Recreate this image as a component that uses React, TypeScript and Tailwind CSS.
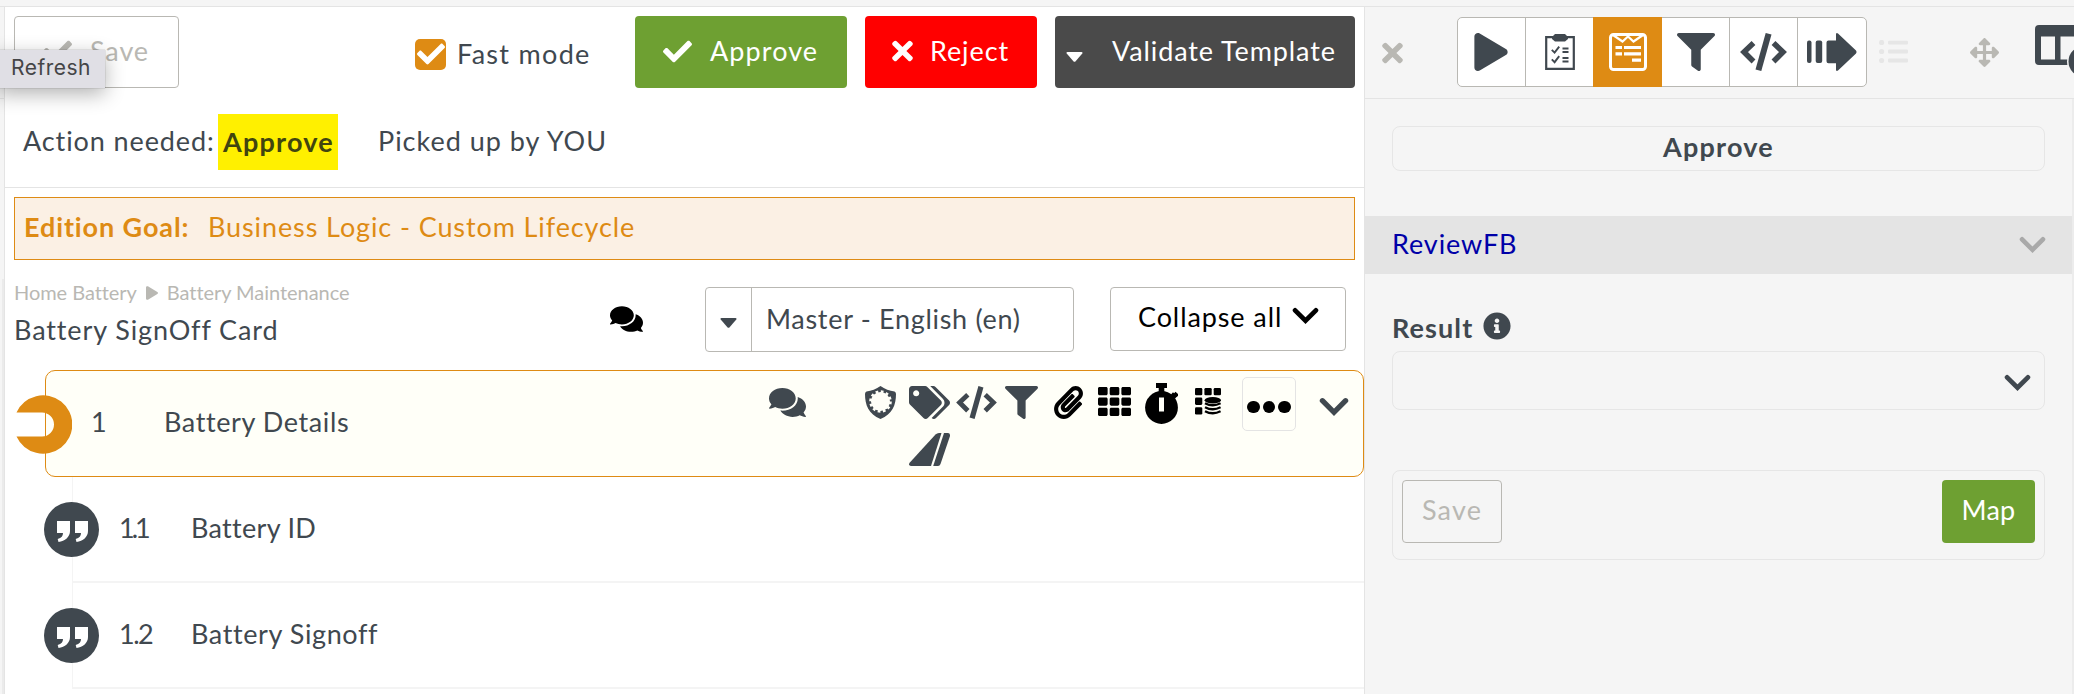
import React from 'react';
import { FaArrowsAlt, FaCheck, FaComments, FaFilter, FaInfoCircle, FaPaperclip, FaPlay, FaTags, FaTh, FaTimes } from 'react-icons/fa';

const children = [
  { id: '1.1', name: 'Battery ID', idTrack: 'tracking-[-3px]', nameTrack: 'tracking-[0.3px]' },
  { id: '1.2', name: 'Battery Signoff', idTrack: 'tracking-[-1.5px]', nameTrack: 'tracking-[0.6px]' },
];

const Chevron: React.FC<{ className?: string }> = ({ className }) => (
  <svg viewBox="0 0 28 19" className={className} fill="none" stroke="currentColor" strokeWidth="5" strokeLinecap="round">
    <path d="M3 3.5L14 14.5L25 3.5" />
  </svg>
);

const Caret: React.FC<{ className?: string }> = ({ className }) => (
  <svg viewBox="0 0 17 10" className={className} fill="currentColor">
    <path d="M1.5 0H15.5Q17 0.3 16.3 1.6L9.6 9.2Q8.5 10.2 7.4 9.2L0.7 1.6Q0 0.3 1.5 0Z" />
  </svg>
);

const CodeIcon: React.FC<{ className?: string }> = ({ className }) => (
  <svg viewBox="0 0 47 38" className={className} fill="none" stroke="currentColor">
    <path d="M13.5 10L4 19L13.5 28.5" strokeWidth="5.5" />
    <path d="M33.5 10L43 19L33.5 28.5" strokeWidth="5.5" />
    <path d="M28.6 0.8L18.4 37.2" strokeWidth="6" />
  </svg>
);

const ClipboardIcon = () => (
  <svg viewBox="0 0 30 36" className="w-[30px] h-[36px]" fill="none" stroke="currentColor">
    <path d="M1.2 3.2H28.8V34.8H1.2Z" strokeWidth="2.2" />
    <path d="M7 3L10 0H20L23 3V5L20 7.5H10L7 5Z" fill="currentColor" stroke="none" />
    <path d="M6.8 15.8L9.6 18.6L14.2 12.6M6.8 25.4L9.6 28.2L14.2 22.2" strokeWidth="1.9" />
    <path d="M17.5 14.5H23.5M17.5 18H23.5M17.5 24H23.5M17.5 27.5H23.5" strokeWidth="1.8" />
  </svg>
);

const FormIcon = () => (
  <svg viewBox="0 0 38 38" className="w-[38px] h-[38px]" fill="none" stroke="currentColor">
    <rect x="1.5" y="1.5" width="35" height="35" rx="3" strokeWidth="3" />
    <path d="M4 2L13.5 8.5L19 3.5L24.5 8.5L34 2" strokeWidth="2.2" />
    <path d="M6.5 14.5H13M15 14.5H32M6.5 20.8H13M15 20.8H32M23 27.2H32" strokeWidth="3.2" />
  </svg>
);

const ForwardIcon = () => (
  <svg viewBox="0 0 50 38" className="w-[50px] h-[38px]" fill="currentColor">
    <rect x="0" y="7.5" width="4.5" height="22.5" rx="2" />
    <rect x="8.7" y="7.5" width="6.5" height="22.5" rx="2" />
    <path d="M21.5 7.5H29V1Q29.5-.7 31 .5L49 17.6Q50 19 49 20.4L31 37.5Q29.5 38.7 29 37V30.2H21.5Q19.5 30.2 19.5 28.2V9.5Q19.5 7.5 21.5 7.5Z" />
  </svg>
);

const ShieldIcon = () => (
  <svg viewBox="0 0 31 33" className="w-[31px] h-[33px]">
    <path d="M15.5 0Q22 4.5 29.5 5.5Q31 6 31 8C31 19 27.5 28 15.5 33C3.5 28 0 19 0 8Q0 6 1.5 5.5Q9 4.5 15.5 0Z" fill="currentColor" />
    <circle cx="15.5" cy="15.5" r="9.5" fill="#fffff8" />
    <circle cx="15.5" cy="15.5" r="10" fill="none" stroke="#fffff8" strokeWidth="2.6" strokeDasharray="2.7 2.536" />
  </svg>
);

const SlopeIcon = () => (
  <svg viewBox="0 0 41 33" className="w-[41px] h-[33px]" fill="currentColor">
    <path d="M30 0H32.5L22 33H2Q-0.6 32.5 0.4 30L26.5 1.5Q28 0 30 0Z" />
    <path d="M35 0H39Q41.4 0.4 41 3L31.5 31Q30.8 33 29 33H24.2Z" />
  </svg>
);

const StopwatchIcon = () => (
  <svg viewBox="0 0 33 41" className="w-[33px] h-[41px]" fill="currentColor">
    <path d="M11 0H22V5H19.3V9H13.7V5H11Z" />
    <circle cx="16.5" cy="24.5" r="16.4" />
    <path d="M25.5 12L28 9.3L32.3 13.2L29.8 15.8Z" />
    <path d="M29.5 9.8L32.8 12.8" stroke="currentColor" strokeWidth="3" />
    <rect x="14" y="14.5" width="5" height="14" fill="#fffff8" />
  </svg>
);

const GridDataIcon = () => (
  <svg viewBox="0 0 26 27" className="w-[26px] h-[27px]" fill="currentColor">
    <rect x="0" y="0" width="7.3" height="7.3" rx="1.3" />
    <rect x="9.4" y="0" width="7.3" height="7.3" rx="1.3" />
    <rect x="18.7" y="0" width="7.3" height="7.3" rx="1.3" />
    <rect x="0" y="9.6" width="7.3" height="7.3" rx="1.3" />
    <rect x="0" y="19.2" width="7.3" height="7.3" rx="1.3" />
    <ellipse cx="17.8" cy="12.3" rx="8.2" ry="3.2" />
    <g fill="none" stroke="currentColor" strokeWidth="2.4">
      <path d="M10 15.2Q17.8 19.4 25.6 15.2M10 19.2Q17.8 23.4 25.6 19.2M10 23.2Q17.8 27.4 25.6 23.2" />
    </g>
  </svg>
);

const ListIcon = () => (
  <svg viewBox="0 0 29 23" className="w-[29px] h-[23px]" fill="#e6e6e6">
    <circle cx="2.6" cy="2.5" r="2.6" />
    <circle cx="2.6" cy="11.5" r="2.6" />
    <circle cx="2.6" cy="20.5" r="2.6" />
    <rect x="9" y="0.7" width="20" height="3.8" rx="1" />
    <rect x="9" y="9.6" width="20" height="3.8" rx="1" />
    <rect x="9" y="18.6" width="20" height="3.8" rx="1" />
  </svg>
);

const ColumnsIcon = () => (
  <svg viewBox="0 0 39 50" className="w-[39px] h-[50px] shrink-0">
    <path d="M4 0H39V40H4Q0 40 0 36V4Q0 0 4 0ZM6 11.5V34.5H20V11.5ZM25.5 11.5V34.5H39V11.5Z" fill="#40484f" fillRule="evenodd" />
    <circle cx="49" cy="36.5" r="17" fill="#f5f5f5" />
    <circle cx="49" cy="36.5" r="15.5" fill="#40484f" />
  </svg>
);

const QuoteBadge = () => (
  <svg viewBox="0 0 55 55" className="absolute -left-[29px] top-[25px] w-[55px] h-[55px]">
    <circle cx="27.5" cy="27.5" r="27.5" fill="#40484f" />
    <path d="M13 19H26V29C26 35 21 39 14.5 40L13.7 37C17.5 36 19 34 19 31H13Z" fill="#fff" />
    <path d="M31 19H44V29C44 35 39 39 32.5 40L31.7 37C35.5 36 37 34 37 31H31Z" fill="#fff" />
  </svg>
);

const Toolbar = () => (
  <div className="flex h-[88px] pt-[9px] pl-[9px]">
    <button className="flex items-center w-[165px] h-[72px] pl-[28px] pb-[2px] rounded border border-[#b9b8b3] text-[#b9b8b3]">
      <FaCheck className="w-[29px] h-[29px]" />
      <span className="ml-[18px]">Save</span>
    </button>
    <div className="flex items-center ml-[236px] h-[76px] w-[220px]">
      <span className="flex items-center justify-center w-[31px] h-[31px] rounded-[5px] bg-[#de8b14] text-white">
        <FaCheck className="w-[28px] h-[28px]" />
      </span>
      <span className="ml-[11px] tracking-[1.3px]">Fast mode</span>
    </div>
    <button className="flex items-center w-[212px] h-[72px] pl-[28px] pb-[2px] rounded bg-[#6ea032] text-white">
      <FaCheck className="w-[29px] h-[29px]" />
      <span className="ml-[18px] tracking-[1.1px]">Approve</span>
    </button>
    <button className="flex items-center ml-[18px] w-[172px] h-[72px] pl-[27px] pb-[2px] rounded bg-[#ff0000] text-white">
      <FaTimes className="w-[21px] h-[30px]" />
      <span className="ml-[17px]">Reject</span>
    </button>
    <button className="flex items-center ml-[18px] w-[300px] h-[72px] pl-[11px] pb-[2px] rounded bg-[#4a4a4a] text-white">
      <Caret className="w-[17px] h-[10px] mt-[12px]" />
      <span className="ml-[29px]">Validate Template</span>
    </button>
  </div>
);

const CardHeader = () => (
  <div className="flex h-[110px] pl-[9px]">
    <div className="w-[596px] pt-[20px]">
      <div className="flex items-center h-[25px] text-[20px] leading-[25px] tracking-[-0.05px] text-[#b9b8b3]">
        <span>Home Battery</span>
        <FaPlay className="w-[12px] h-[14px] mx-[9px]" />
        <span>Battery Maintenance</span>
      </div>
      <div className="mt-[9px] leading-[32px]">Battery SignOff Card</div>
    </div>
    <FaComments className="w-[33px] h-[30px] mt-[44px] text-black" />
    <div className="flex ml-[62px] mt-[27px] w-[369px] h-[65px] rounded border border-[#b9b8b3]">
      <div className="flex justify-center w-[46px] pt-[30px] border-r border-[#b9b8b3]">
        <Caret className="w-[17px] h-[10px]" />
      </div>
      <div className="pl-[14px] pt-[14px] leading-[34px] tracking-[0.7px]">Master - English (en)</div>
    </div>
    <button className="flex ml-[36px] mt-[27px] w-[236px] h-[64px] pl-[27px] rounded border border-[#b9b8b3] text-black">
      <span className="w-[154px] text-left pt-[12px] leading-[34px]">Collapse all</span>
      <Chevron className="w-[27px] h-[18px] mt-[19px]" />
    </button>
  </div>
);

const ActiveRow = () => (
  <div className="relative flex h-[107px] ml-[40px] rounded-[10px] border border-[#de8b14] bg-[#fffff8]">
    <svg viewBox="0 0 56 59" className="absolute -left-[30px] top-[24px] w-[56px] h-[59px]">
      <path d="M0.5 17.5A29.2 29.2 0 1 1 0.5 41.5H26A12 12 0 0 0 26 17.5Z" fill="#de8b14" />
    </svg>
    <div className="w-[73px] pl-[45px] pt-[34px] leading-[34px]">1</div>
    <div className="w-[650px] pl-[45px] pt-[34px] leading-[34px] tracking-[0.6px]">Battery Details</div>
    <FaComments className="w-[37px] h-[33px] mt-[15px]" />
    <div className="ml-[59px] pt-[15px]"><ShieldIcon /></div>
    <div className="flex flex-col gap-[14px] ml-[13px] pt-[15px]">
      <FaTags className="w-[41px] h-[33px]" />
      <SlopeIcon />
    </div>
    <CodeIcon className="w-[41px] h-[33px] ml-[6px] mt-[15px]" />
    <FaFilter className="w-[33px] h-[33px] ml-[8px] mt-[15px]" />
    <div className="flex text-black">
      <FaPaperclip className="w-[29px] h-[33px] ml-[16px] mt-[15px]" />
      <FaTh className="w-[33px] h-[33px] ml-[15px] mt-[14px]" />
      <div className="ml-[14px] pt-[12px]"><StopwatchIcon /></div>
      <div className="ml-[17px] pt-[17px]"><GridDataIcon /></div>
      <div className="flex items-center justify-center gap-[3px] ml-[21px] mt-[6px] w-[54px] h-[54px] pt-[6px] rounded-[5px] border border-[#e4e4e4]">
        <span className="w-[12.5px] h-[12.5px] rounded-full bg-black" />
        <span className="w-[12.5px] h-[12.5px] rounded-full bg-black" />
        <span className="w-[12.5px] h-[12.5px] rounded-full bg-black" />
      </div>
    </div>
    <Chevron className="w-[30px] h-[20px] ml-[23px] mt-[26px]" />
  </div>
);

const Editor = () => (
  <main className="w-[1359px] h-full bg-white">
    <Toolbar />
    <div className="flex items-center h-[93px] pl-[18px] border-b border-[#e4e4e4]">
      <span className="w-[195px]">Action needed:</span>
      <span className="flex items-center w-[120px] h-[56px] mt-[2px] pl-[5px] bg-[#fff000] text-[#41450f] font-bold tracking-[1.2px]">Approve</span>
      <span className="ml-[40px] tracking-[1px]">Picked up by YOU</span>
    </div>
    <div className="flex items-center mt-[9px] mx-[9px] h-[63px] pl-[9px] pb-[3px] border border-[#de8b14] bg-[#fbf0e4] text-[#de8b14]">
      <span className="w-[184px] font-bold">Edition Goal:</span>
      <span>Business Logic - Custom Lifecycle</span>
    </div>
    <CardHeader />
    <ActiveRow />
    {children.map((row) => (
      <div key={row.id} className="relative flex h-[106px] ml-[67px] border-l border-b-2 border-[#f4f4f4]">
        <QuoteBadge />
        <div className={`w-[73px] pl-[46px] pt-[34px] leading-[34px] ${row.idTrack}`}>{row.id}</div>
        <div className={`pl-[45px] pt-[34px] leading-[34px] ${row.nameTrack}`}>{row.name}</div>
      </div>
    ))}
  </main>
);

const SidePanel = () => (
  <aside className="flex-1 h-full border-l border-[#e4e4e4] bg-[#f5f5f5] overflow-hidden">
    <div className="flex h-[92px] border-b border-[#e4e4e4] overflow-hidden">
      <FaTimes className="w-[21px] h-[30px] ml-[17px] mt-[31px] text-[#b9b8b3] shrink-0" />
      <div className="flex ml-[54px] mt-[10px] w-[410px] h-[70px] rounded-[5px] border border-[#b9b8b3] bg-white shrink-0">
        <div className="flex items-center w-[68px] pl-[16px] border-r border-[#b9b8b3]"><FaPlay className="w-[34px] h-[38px]" /></div>
        <div className="flex items-center justify-center w-[67px]"><ClipboardIcon /></div>
        <div className="flex items-center justify-center w-[69px] -my-px bg-[#de8b14] text-white"><FormIcon /></div>
        <div className="flex items-center justify-center w-[68px] border-r border-[#b9b8b3]"><FaFilter className="w-[38px] h-[38px]" /></div>
        <div className="flex items-center justify-center w-[68px] border-r border-[#b9b8b3]"><CodeIcon className="w-[47px] h-[38px]" /></div>
        <div className="flex items-center justify-center w-[68px]"><ForwardIcon /></div>
      </div>
      <div className="ml-[12px] mt-[33px] shrink-0"><ListIcon /></div>
      <FaArrowsAlt className="w-[29px] h-[29px] ml-[62px] mt-[31px] text-[#b9b8b3] shrink-0" />
      <div className="ml-[36px] mt-[18px] shrink-0"><ColumnsIcon /></div>
    </div>
    <div className="h-full border-r-2 border-[#ececec]">
      <div className="h-[117px] pt-[27px] px-[27px]">
        <div className="flex items-center justify-center h-[45px] pb-[3px] rounded-[8px] border border-[#e6e6e6] font-bold tracking-[1.2px]">Approve</div>
      </div>
      <div className="flex items-center justify-between h-[58px] pl-[27px] pr-[26px] bg-[#e4e4e4]">
        <span className="pb-[3px] text-[#0000a8]">ReviewFB</span>
        <Chevron className="w-[27px] h-[18px] text-[#a9a9a9]" />
      </div>
      <div className="px-[27px]">
        <div className="flex items-center h-[77px] pt-[28px] font-bold">
          <span className="w-[91px] pt-[2px] tracking-[1.1px]">Result</span>
          <FaInfoCircle className="w-[28px] h-[28px] -mt-px" />
        </div>
        <div className="flex items-center justify-end h-[59px] pr-[13px] rounded-[8px] border border-[#e6e6e6]">
          <Chevron className="w-[27px] h-[18px] mt-[4px]" />
        </div>
        <div className="flex justify-between mt-[60px] h-[90px] pt-[9px] px-[9px] rounded-[8px] border border-[#e6e6e6]">
          <button className="flex items-center justify-center w-[100px] h-[63px] pb-[3px] rounded border border-[#b9b8b3] text-[#b9b8b3] tracking-[1.2px]">Save</button>
          <button className="flex items-center justify-center w-[93px] h-[63px] pb-[3px] rounded bg-[#6ea032] text-white tracking-[0.3px]">Map</button>
        </div>
      </div>
    </div>
  </aside>
);

const App: React.FC = () => {
  return (
    <div className="relative flex flex-col w-[2074px] h-[694px] overflow-hidden bg-[#f5f5f5] font-['Lato',sans-serif] text-[27px] leading-[34px] tracking-[0.9px] text-[#40484f] whitespace-nowrap">
      <div className="h-[7px] border-b border-[#e4e4e4] shrink-0" />
      <div className="flex h-[687px]">
        <div className="w-[5px] border-r border-[#e4e4e4]">
          <div className="h-[92px] border-b border-[#e4e4e4]" />
          <div className="h-[180px]" />
          <div className="h-[415px] ml-[2px] bg-[#ebebeb]" />
        </div>
        <Editor />
        <SidePanel />
      </div>
      {/* native tooltip */}
      <div className="absolute -left-[4px] top-[50px] w-[109px] h-[38px] pl-[15px] bg-[#e0dfe5] text-[#454547] font-['Inter',sans-serif] text-[21px] leading-[36px] tracking-[0.5px] shadow-[0_6px_20px_rgba(0,0,0,0.3),0_0_1px_rgba(0,0,0,0.4)]">
        Refresh
      </div>
    </div>
  );
};

export default App;
